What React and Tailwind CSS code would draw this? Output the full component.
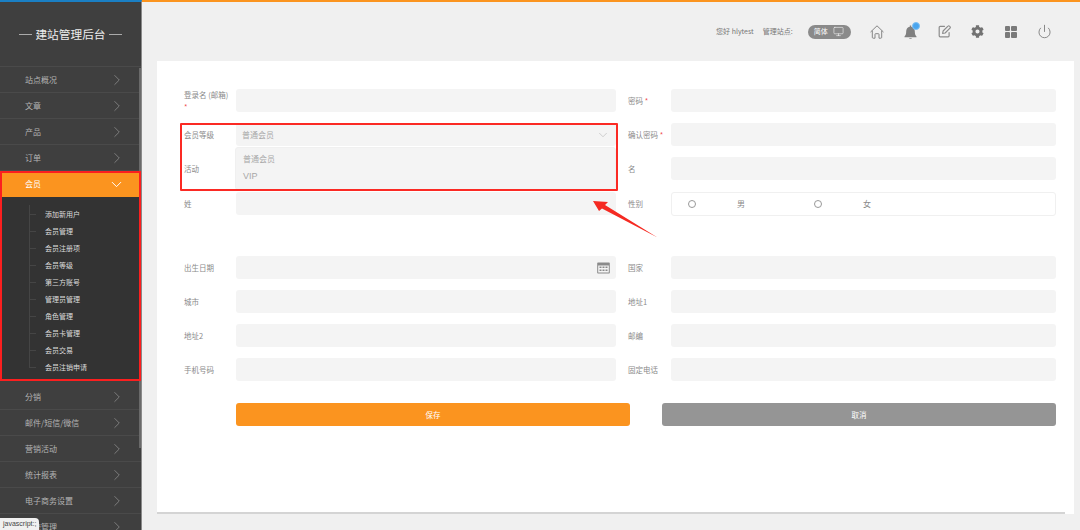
import { ChevronRight, ChevronDown, Power, Monitor } from "lucide-react";
import { FaCog } from "react-icons/fa";

const font = { fontFamily: '"Noto Sans CJK SC", "Liberation Sans", sans-serif' };
const latin = { fontFamily: '"Liberation Sans", sans-serif' };

const topMenus = ["站点概况", "文章", "产品", "订单"];
const subMenus = ["添加新用户", "会员管理", "会员注册项", "会员等级", "第三方账号", "管理员管理", "角色管理", "会员卡管理", "会员交易", "会员注销申请"];
const bottomMenus = ["分销", "邮件/短信/微信", "营销活动", "统计报表", "电子商务设置", "系统管理"];

function MenuItem({ label }) {
  return (
    <div className="h-[26px] shrink-0 flex items-center justify-between pl-[25px] pr-[15px] border-b border-[#4a4a4a] text-[8px] text-[#b4b4b4]">
      <span>{label}</span>
      <ChevronRight size={18} strokeWidth={0.9} className="text-[#9a9a9a]" />
    </div>
  );
}

function Sidebar() {
  return (
    <div className="relative w-[142px] shrink-0 h-full overflow-hidden bg-[#3f3f3f] border-r border-[#8a8a8a] border-t-2 border-t-[#1a7fc4]">
      <div className="h-[64px] flex items-center justify-center gap-[3px] text-[11.7px] text-[#ececec]">
        <span className="w-[13px] h-px bg-[#aaaaaa]"></span>
        <span>建站管理后台</span>
        <span className="w-[13px] h-px bg-[#aaaaaa]"></span>
      </div>
      <div className="border-t border-[#4a4a4a]">
        {topMenus.map((m) => <MenuItem key={m} label={m} />)}
      </div>
      <div className="h-[26px] flex items-center justify-between pl-[25px] pr-[16px] bg-[#fb941f] text-[8px] text-white">
        <span>会员</span>
        <ChevronDown size={17} strokeWidth={1.4} />
      </div>
      <div className="relative h-[184px] bg-[#333333] pt-[9px]">
        <div className="absolute left-[29px] top-[8px] w-px h-[162px] bg-[#454545]"></div>
        {subMenus.map((m) => (
          <div key={m} className="relative h-[17px] flex items-center pl-[45px] text-[7px] text-[#dcdcdc]">
            <span className="absolute left-[29px] top-[8px] w-[7px] h-px bg-[#454545]"></span>
            {m}
          </div>
        ))}
      </div>
      <div className="mt-[3px]">
        {bottomMenus.map((m) => <MenuItem key={m} label={m} />)}
      </div>
      <div className="absolute right-0 top-[66px] w-[2px] h-[380px] bg-[#6a6a6a]"></div>
      <div className="absolute left-0 top-[169px] w-[141px] h-[210px] border-2 border-[#fb1f1f]"></div>
      <div className="absolute left-0 bottom-0 h-[12px] px-[3px] bg-[#f0f0f0] text-[7px] leading-[12px] text-[#444444] rounded-tr-sm" style={latin}>javascript:;</div>
    </div>
  );
}

function HeaderIcon({ children }) {
  return <div className="w-[33.4px] flex items-center justify-center">{children}</div>;
}

function Header() {
  return (
    <div className="h-[59px] shrink-0 flex items-center justify-end pr-[19px] text-[7px] text-[#777777]">
      <span>您好 hlytest</span>
      <span className="ml-[9px]">管理站点:</span>
      <div className="ml-[15px] mr-[10px] w-[43px] h-[14px] rounded-full bg-[#8a8a8a] flex items-center justify-between pl-[6px] pr-[7px] text-white">
        <span>简体</span>
        <Monitor size={11} strokeWidth={1.2} />
      </div>
      <HeaderIcon>
        <svg width="14" height="14" viewBox="0 0 14 14" fill="none" stroke="#858585" strokeWidth="1" strokeLinejoin="round" strokeLinecap="round">
          <path d="M.8 6.800 7 .8l6.200 6M2.300 6v6.300a.9.9 0 0 0 .9.9h1.800V9.300a.6.6 0 0 1 .6-.6h2.800a.6.6 0 0 1 .6.6v3.900h1.800a.9.9 0 0 0 .9-.9V6" />
        </svg>
      </HeaderIcon>
      <HeaderIcon>
        <div className="relative">
          <svg width="13" height="14" viewBox="0 0 13 14" fill="#808080" className="block">
            <path d="M5.800.5h1.400v1.200c2.300.4 3.600 2.200 3.600 4.500 0 2.600.5 4 1.700 5.300v.8H.5v-.8C1.700 10.200 2.200 8.800 2.200 6.200c0-2.300 1.300-4.100 3.600-4.500V.5ZM4.800 13h3.400a1.800 1 0 0 1-3.400 0Z" />
          </svg>
          <span className="absolute -top-[3px] -right-[3px] w-[8px] h-[8px] rounded-full bg-[#4aa5ee] border border-[#7cc0f5]"></span>
        </div>
      </HeaderIcon>
      <HeaderIcon>
        <svg width="13" height="13" viewBox="0 0 13 13" fill="none" stroke="#8c8c8c" strokeWidth="1.2" strokeLinejoin="round" strokeLinecap="round">
          <path d="M6.500 1.300H2.200a1 1 0 0 0-1 1v8.500a1 1 0 0 0 1 1h7.900a1 1 0 0 0 1-1V7.500" />
          <path d="M4.600 8.500l.5-2.500L10 1.100a1 1 0 0 1 1.500 0l.5.500a1 1 0 0 1 0 1.500L7.100 8Z" />
        </svg>
      </HeaderIcon>
      <HeaderIcon><FaCog size={13} color="#727272" /></HeaderIcon>
      <HeaderIcon>
        <div className="grid grid-cols-2 gap-[1px] w-[12px] h-[12px]">
          <span className="bg-[#7a7a7a] rounded-[1px]"></span>
          <span className="bg-[#7a7a7a] rounded-[1px]"></span>
          <span className="bg-[#7a7a7a] rounded-[1px]"></span>
          <span className="bg-[#7a7a7a] rounded-[1px]"></span>
        </div>
      </HeaderIcon>
      <HeaderIcon><Power size={15} strokeWidth={1.4} className="text-[#7a7a7a]" /></HeaderIcon>
    </div>
  );
}

function Label({ text, required, below, className = "" }) {
  return (
    <div className={"text-[7.5px] text-[#8a8a8a] leading-[12px] whitespace-nowrap " + className}>
      {text}
      {required && <span className="text-[#f05050]"> *</span>}
      {below && <div className="text-[#f05050]">*</div>}
    </div>
  );
}

function Field({ label, required, below, wide, children }) {
  return (
    <div className="flex items-center h-[23px]">
      <Label text={label} required={required} below={below} className={wide ? "w-[43px]" : "w-[52px]"} />
      <div className="relative flex-1 h-[23px] bg-[#f4f4f4] rounded-[3px]">{children}</div>
    </div>
  );
}

function Row({ children, className = "" }) {
  return <div className={"grid grid-cols-[432px_428px] gap-x-[12px] " + className}>{children}</div>;
}

function FormCard() {
  return (
    <div className="relative w-[917px] h-[453px] bg-white pt-[28px] pl-[27px]">
      <Row>
        <Field label="登录名 (邮箱)" below />
        <Field label="密码" required wide />
      </Row>
      <Row className="mt-[11px]">
        <Field label="会员等级">
          <span className="absolute left-[6px] top-[6px] text-[8px] leading-[12px] text-[#a8a8a8]">普通会员</span>
          <ChevronDown size={14} strokeWidth={0.9} className="absolute right-[6px] top-[5px] text-[#aaaaaa]" />
        </Field>
        <Field label="确认密码" required wide />
      </Row>
      <Row className="mt-[11px]">
        <Field label="活动" />
        <Field label="名" wide />
      </Row>
      <Row className="mt-[12px]">
        <Field label="姓" />
        <div className="flex items-center h-[23px]">
          <Label text="性别" className="w-[43px]" />
          <div className="flex-1 h-[24px] rounded-[3px] border border-[#f0f0f0] flex items-center text-[8px] text-[#8a8a8a]">
            <span className="ml-[16px] w-[8px] h-[8px] rounded-full border border-[#999999]"></span>
            <span className="ml-[41px]">男</span>
            <span className="ml-[69px] w-[8px] h-[8px] rounded-full border border-[#999999]"></span>
            <span className="ml-[41px]">女</span>
          </div>
        </div>
      </Row>
      <Row className="mt-[41px]">
        <Field label="出生日期">
          <svg className="absolute right-[6px] top-[5px]" width="13" height="13" viewBox="0 0 13 13" fill="#8a8a8a">
            <path d="M1 1.500h11a.8.8 0 0 1 .8.8v9.400a.8.8 0 0 1-.8.8H1a.8.8 0 0 1-.8-.8V2.300A.8.8 0 0 1 1 1.500Zm.2 3v7h10.600v-7H1.200Z" />
            <path d="M2.500 5.500h2v1.500h-2zM5.500 5.500h2v1.500h-2zM8.500 5.500h2v1.500h-2zM2.500 8.500h2v1.500h-2zM5.500 8.500h2v1.500h-2zM8.500 8.500h2v1.500h-2z" />
          </svg>
        </Field>
        <Field label="国家" wide />
      </Row>
      <Row className="mt-[11px]">
        <Field label="城市" />
        <Field label="地址1" wide />
      </Row>
      <Row className="mt-[11px]">
        <Field label="地址2" />
        <Field label="邮编" wide />
      </Row>
      <Row className="mt-[11px]">
        <Field label="手机号码" />
        <Field label="固定电话" wide />
      </Row>
      <div className="mt-[22px] flex pl-[52px]">
        <button className="w-[394px] h-[23px] rounded-[3px] bg-[#fb941f] text-[7.5px] text-white">保存</button>
        <button className="ml-[32px] w-[394px] h-[23px] rounded-[3px] bg-[#959595] text-[7.5px] text-white">取消</button>
      </div>
      <div className="absolute left-0 bottom-0 w-[908px] h-[2px] bg-[#d4d4d4]"></div>

      {/* 下拉展开的面板 */}
      <div className="absolute left-[78px] top-[86px] w-[381px] h-[43px] bg-[#f4f4f4] rounded-[3px] border border-[#f0f0f0] text-[8px] text-[#a8a8a8]">
        <div className="pl-[7px] pt-[5px] leading-[12px]">普通会员</div>
        <div className="pl-[7px] pt-[5px] leading-[12px] text-[9px]" style={latin}>VIP</div>
      </div>
      {/* 标注 */}
      <div className="absolute left-[23px] top-[62px] w-[438px] h-[68px] border-2 border-[#fb2a24] rounded-[1px] pointer-events-none"></div>
      <svg className="absolute left-[430px] top-[130px] pointer-events-none" width="80" height="50" viewBox="0 0 80 50">
        <path d="M6 10 L21 11 L18 14 L70.500 46.500 L15 17.500 L12 20 Z" fill="#f52a22" />
      </svg>
    </div>
  );
}

export default function App() {
  return (
    <div className="w-[1080px] h-[530px] flex overflow-hidden bg-[#f0f0f0]" style={font}>
      <Sidebar />
      <div className="flex-1 min-w-0 border-t-2 border-[#fb941f] pl-[15px]">
        <Header />
        <FormCard />
      </div>
    </div>
  );
}
